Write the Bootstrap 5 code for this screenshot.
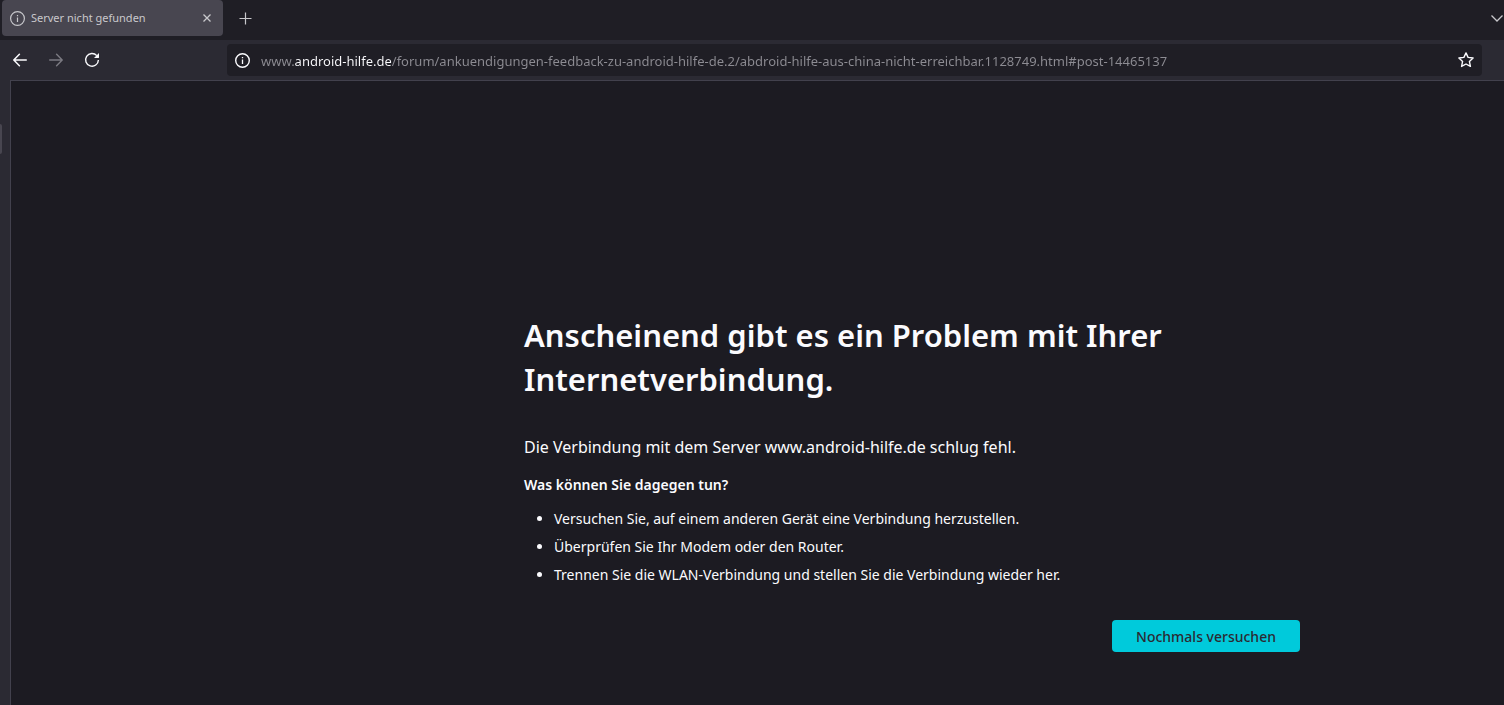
<!DOCTYPE html>
<html lang="de">
<head>
<meta charset="utf-8">
<meta name="viewport" content="width=device-width, initial-scale=1">
<title>Server nicht gefunden</title>
<link href="https://cdn.jsdelivr.net/npm/bootstrap@5.3.0/dist/css/bootstrap.min.css" rel="stylesheet">
<style>
  body { background: #2b2a33; color: #fbfbfe; font-family: "Noto Sans", "Open Sans", sans-serif; font-size: 14px; }
  button svg, .browser-tab svg, .urlbar svg { display: block; flex: none; }
  .tabstrip { height: 40px; background: #1f1e25; padding-left: 2px; }
  .browser-tab { width: 221px; height: 36px; background: #484650; border-radius: 4px; padding: 0 8px; color: #c8c8cc; font-size: 11px; }
  .tab-title { margin-left: 6px; padding-top: 1px; }
  .tool { padding: 0; border: 0; background: none; color: #fbfbfe; width: 36px; height: 32px; display: flex; align-items: center; justify-content: center; }
  .tool:disabled { color: #7b7a82; }
  .tool-dim { color: #c8c8cc; height: 36px; }
  .tool-close { width: 16px; }
  .tool-list { width: 14px; }
  .tool-star { width: 32px; }
  .toolbar { height: 40px; padding: 0 22px 0 2px; }
  .urlbar { height: 32px; background: #1f1e25; border-radius: 4px; padding-left: 8px; margin-left: 117px; }
  .url { border: 0; outline: 0; padding: 2px 0 0; height: 24px; margin-left: 11px; font-size: 13px; color: #8d8c93;
    background: linear-gradient(90deg, #8d8c93 33px, #fbfbfe 33px, #fbfbfe 130px, #8d8c93 130px);
    -webkit-background-clip: text; background-clip: text; -webkit-text-fill-color: transparent; }
  .sidebar-edge { width: 10px; padding-top: 44px; }
  .sidebar-grip { width: 2px; height: 30px; background: #484650; border-radius: 0 2px 2px 0; }
  .viewport { background: #1c1b22; border: solid #42414d; border-width: 1px 0 0 1px; padding: 232px 48px 52px; }
  .error-page { max-width: 1085px; padding-left: 309px; }
  .error-title { font-size: 31px; line-height: 44px; font-weight: 600; margin-bottom: 34px; }
  .error-short { font-size: 16px; line-height: 24px; margin-bottom: 15px; }
  .error-list-title { font-weight: 600; line-height: 22px; margin-bottom: 11px; }
  .error-list { padding-left: 30px; line-height: 24px; margin-bottom: 33px; }
  .error-list li + li { margin-top: 4px; }
  .btn-retry { width: 188px; height: 32px; padding: 0; border: 0; border-radius: 4px; background: #00cadb; color: #2b2a33; font-size: 14px; font-weight: 500; }
  .btn-retry:hover { background: #80ebff; color: #2b2a33; }
</style>
</head>
<body class="d-flex flex-column min-vh-100">
  <header>
    <div class="tabstrip d-flex align-items-start">
      <div class="browser-tab d-flex align-items-center">
        <svg width="15" height="15" viewBox="0 0 15 15" fill="none" stroke="currentColor" aria-hidden="true"><circle cx="7.5" cy="7.5" r="6.9" stroke-width="1.2"/><path d="M7.5 6.5v4.5M7.5 4v1.2" stroke-width="1.2"/></svg>
        <span class="tab-title flex-grow-1 text-truncate">Server nicht gefunden</span>
        <button class="tool tool-dim tool-close" type="button" aria-label="Tab schließen"><svg width="8" height="8" viewBox="0 0 8 8" stroke="currentColor" stroke-width="1.3"><path d="M.5.5l7 7M7.5.5l-7 7"/></svg></button>
      </div>
      <button class="tool tool-dim ms-1" type="button" aria-label="Neuer Tab"><svg width="13" height="13" viewBox="0 0 13 13" stroke="currentColor" stroke-width="1.2"><path d="M6.5 .5v12M.5 6.5h12"/></svg></button>
      <button class="tool tool-dim tool-list ms-auto" type="button" aria-label="Alle Tabs auflisten"><svg width="12" height="7" viewBox="0 0 12 7" fill="none" stroke="currentColor" stroke-width="1.3"><path d="M.5.5L6 6 11.5.5"/></svg></button>
    </div>
    <nav class="toolbar d-flex align-items-center" aria-label="Navigation">
      <button class="tool" type="button" aria-label="Zurück"><svg width="14" height="14" viewBox="0 0 14 14" fill="none" stroke="currentColor" stroke-width="1.5" stroke-linecap="round" stroke-linejoin="round"><path d="M13.3 7H1M6.4 1.3L.8 7l5.6 5.7"/></svg></button>
      <button class="tool" type="button" aria-label="Vor" disabled><svg width="14" height="14" viewBox="0 0 14 14" fill="none" stroke="currentColor" stroke-width="1.4" stroke-linecap="round" stroke-linejoin="round"><path d="M.7 7H13M7.6 1.3L13.2 7l-5.6 5.7"/></svg></button>
      <button class="tool" type="button" aria-label="Neu laden"><svg width="16" height="16" viewBox="0 0 16 16" fill="none" stroke="currentColor" stroke-width="1.4"><path d="M12.8 3.6A6.4 6.4 0 1 0 14.4 8"/><path d="M15 1v4.6a.4.4 0 0 1-.4.4H10z" fill="currentColor" stroke="none"/></svg></button>
      <div class="urlbar d-flex align-items-center flex-grow-1">
        <svg width="15" height="15" viewBox="0 0 15 15" fill="none" stroke="currentColor" aria-hidden="true"><circle cx="7.5" cy="7.5" r="6.8" stroke-width="1.4"/><path d="M7.5 6.5v4.5M7.5 4v1.2" stroke-width="1.3"/></svg>
        <input class="url flex-grow-1" type="text" aria-label="Adresse" spellcheck="false" value="www.android-hilfe.de/forum/ankuendigungen-feedback-zu-android-hilfe-de.2/abdroid-hilfe-aus-china-nicht-erreichbar.1128749.html#post-14465137">
        <button class="tool tool-star" type="button" aria-label="Lesezeichen hinzufügen"><svg width="16" height="16" viewBox="0 0 16 16" fill="none" stroke="currentColor" stroke-width="1.4" stroke-linejoin="round"><path d="M8 .9l2.1 4.5 5 .6-3.7 3.4 1 5L8 12l-4.4 2.4 1-5L.9 6l5-.6z"/></svg></button>
      </div>
    </nav>
  </header>
  <div class="d-flex flex-grow-1">
    <div class="sidebar-edge"><div class="sidebar-grip"></div></div>
    <main class="viewport flex-grow-1">
      <div class="error-page mx-auto">
        <h1 class="error-title">Anscheinend gibt es ein Problem mit Ihrer Internetverbindung.</h1>
        <p class="error-short">Die Verbindung mit dem Server www.android-hilfe.de schlug fehl.</p>
        <p class="error-list-title">Was können Sie dagegen tun?</p>
        <ul class="error-list">
          <li>Versuchen Sie, auf einem anderen Gerät eine Verbindung herzustellen.</li>
          <li>Überprüfen Sie Ihr Modem oder den Router.</li>
          <li>Trennen Sie die WLAN-Verbindung und stellen Sie die Verbindung wieder her.</li>
        </ul>
        <div class="d-flex justify-content-end">
          <button class="btn btn-retry" type="button">Nochmals versuchen</button>
        </div>
      </div>
    </main>
  </div>
<script src="https://cdn.jsdelivr.net/npm/bootstrap@5.3.0/dist/js/bootstrap.bundle.min.js"></script>
</body>
</html>
